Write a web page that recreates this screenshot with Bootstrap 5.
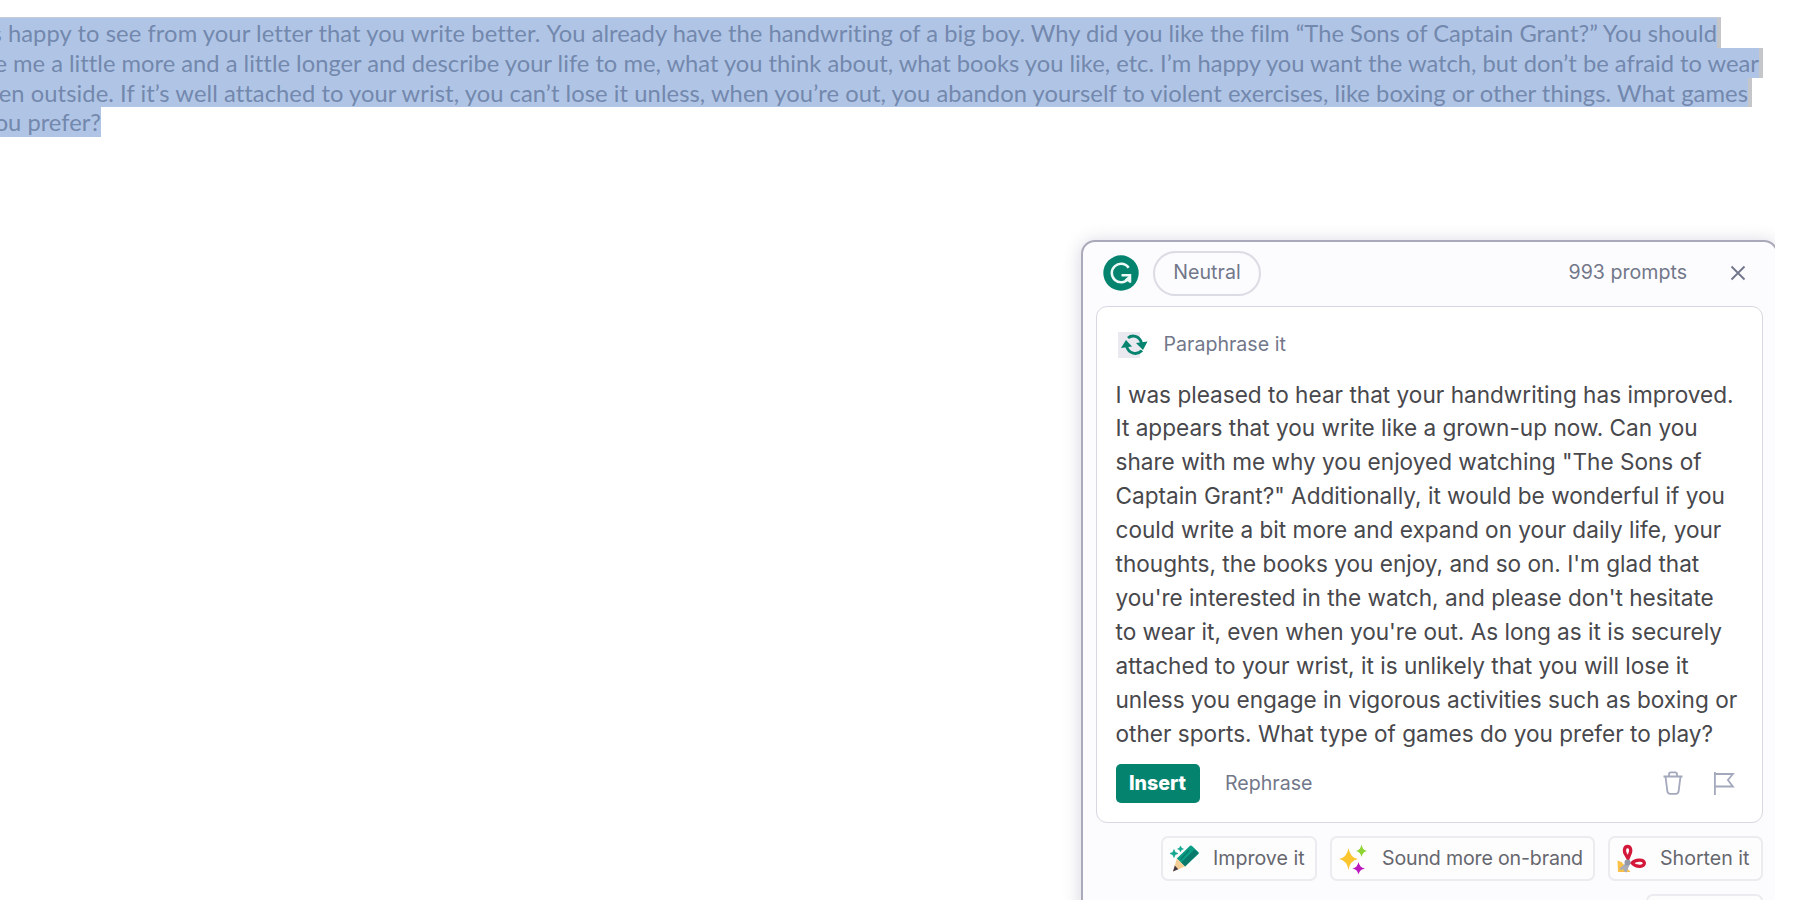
<!DOCTYPE html>
<html lang="en">
<head>
  <meta charset="UTF-8">
  <meta name="viewport" content="width=device-width, initial-scale=1">
  <title>Paraphrase it</title>
  <link href="https://cdn.jsdelivr.net/npm/bootstrap@5.3.3/dist/css/bootstrap.min.css" rel="stylesheet">
  <style>
    body { background: #fff; font-family: Inter, sans-serif; overflow: hidden; }
    .stage { width: 1775px; height: 900px; }

    /* Selected letter text, each line ends at its own width */
    .letter { padding-top: 18px; height: 240px; font: 23.74px/30.6px Lato, sans-serif; font-variant-ligatures: none; color: #7388ad; }
    .sel-line { height: 29.8px; background: #b0c5e5; border-right: 4px solid #c4c6c9; }
    .sel-line:first-child { width: 1721px; letter-spacing: .015px; box-shadow: 0 -1px 0 #c6ccd8; }
    .sel-line:nth-child(2) { width: 1763px; }
    .sel-line:nth-child(3) { width: 1752px; letter-spacing: .06px; }
    .sel-line:last-child { width: 101px; border: 0; }
    .first-sentence { letter-spacing: .085px; white-space: pre; }

    /* Assistant panel */
    .assistant { width: 697px; height: 690px; margin-right: -3px; padding: 9px 13px 0 12.5px; font-size: 19.6px; line-height: 1.2; color: #72778a; background: #fcfcfe; border: 2px solid #aaa9b9; border-radius: 14px; box-shadow: 0 2px 18px rgba(60, 60, 110, .22); }
    .topbar { height: 44px; padding: 0 17px 0 7px; }
    .tone { width: 108px; height: 45px; border: 2px solid #dcdce5; margin-left: 14.5px; }
    .btn-x { margin-left: 43px; }
    .answer { height: 517px; margin-top: 11px; padding: 24px 27px 0 19px; background: #fff; border: 1.5px solid #d7d8e1; border-radius: 11px; }
    .answer-text { margin: 18.5px -12px 0 0; font-size: 22.6px; line-height: 33.93px; color: #48484c; white-space: nowrap; }
    .answer-actions { height: 39px; margin-top: 13px; }
    .btn-insert { width: 84px; height: 39px; font-size: 19.6px; line-height: 1; font-weight: 800; color: #fff; background: #04836f; border-radius: 5px; }
    .rephrase { margin-left: 25.5px; }
    .flag { margin-left: 30px; }
    .chips { gap: 13px; margin-top: 13px; }
    .chip-btn { height: 45px; padding-left: 7px; color: #66676e; background: #fdfdfe; border: 2px solid #ebebf0; border-radius: 7px; }
    .chip-btn svg { margin-right: 14px; }
    .chip-improve { width: 156px; }
    .chip-brand { width: 265px; letter-spacing: -.17px; }
    .chip-shorten { width: 155px; }
    .chip-next { width: 117px; }
  </style>
</head>
<body>
  <div class="stage d-flex flex-column overflow-hidden">
    <!-- Letter -->
    <div class="letter flex-shrink-0 text-nowrap">
      <div class="sel-line d-flex justify-content-end"><span class="first-sentence">s happy to see from your letter that you write better. </span>You already have the handwriting of a big boy. Why did you like the film “The Sons of Captain Grant?” You should</div>
      <div class="sel-line d-flex justify-content-end">e me a little more and a little longer and describe your life to me, what you think about, what books you like, etc. I’m happy you want the watch, but don’t be afraid to wear</div>
      <div class="sel-line d-flex justify-content-end">en outside. If it’s well attached to your wrist, you can’t lose it unless, when you’re out, you abandon yourself to violent exercises, like boxing or other things. What games</div>
      <div class="sel-line d-flex justify-content-end">ou prefer?</div>
    </div>

    <!-- Assistant -->
    <div class="assistant flex-shrink-0 align-self-end">
      <div class="topbar d-flex align-items-center">
        <svg width="36" height="36" viewBox="0 0 36 36">
          <circle cx="18" cy="18" r="17.7" fill="#04836f"/>
          <path d="M25.7 12.7A9.3 9.3 0 1 0 25.7 23.4M18.5 20.3H27V27.5" fill="none" stroke="#eefaf7" stroke-width="2.5"/>
          <path d="M27.8 19.2v8.7l-6.2-3.1z" fill="#eefaf7"/>
        </svg>
        <div class="tone rounded-pill d-flex align-items-center justify-content-center">Neutral</div>
        <span class="ms-auto">993 prompts</span>
        <svg class="btn-x" width="16" height="16" viewBox="0 0 16 16">
          <path d="M1.5 1.5l13 13m0-13l-13 13" stroke="#73778b" stroke-width="1.9"/>
        </svg>
      </div>

      <div class="answer">
        <div class="d-flex align-items-center">
          <svg width="32" height="28" viewBox="0 0 32 28">
            <path d="M2 1h22v26H2z" fill="#e9e9ef"/>
            <path d="M12 7C16 3.500 23.500 4.500 25.500 12M26 19.500C21 24.500 12.500 23 10.500 15" fill="none" stroke="#07846f" stroke-width="2.900"/>
            <path d="M20 12l11.500-1.500L27 19zM16 15.500L5 17 10 9z" fill="#07846f"/>
          </svg>
          <span class="ms-3">Paraphrase it</span>
        </div>
        <p class="answer-text">
          I was pleased to hear that your handwriting has improved.<br>
          It appears that you write like a grown-up now. Can you<br>
          share with me why you enjoyed watching "The Sons of<br>
          Captain Grant?" Additionally, it would be wonderful if you<br>
          could write a bit more and expand on your daily life, your<br>
          thoughts, the books you enjoy, and so on. I'm glad that<br>
          you're interested in the watch, and please don't hesitate<br>
          to wear it, even when you're out. As long as it is securely<br>
          attached to your wrist, it is unlikely that you will lose it<br>
          unless you engage in vigorous activities such as boxing or<br>
          other sports. What type of games do you prefer to play?
        </p>
        <div class="answer-actions d-flex align-items-center">
          <button class="btn btn-insert border-0 p-0">Insert</button>
          <span class="rephrase">Rephrase</span>
          <svg class="ms-auto" width="20" height="24" viewBox="0 0 20 24" fill="none" stroke="#a3a8bc" stroke-width="1.800">
            <path d="M.5 5.500h19M6 5.500V3.200Q6 1.300 8 1.300h4q2 0 2 1.900v2.300M2.500 5.500l1.800 14.300q.4 3 3 3h5.400q2.600 0 3-3l1.800-14.300"/>
          </svg>
          <svg class="flag" width="22" height="24" viewBox="0 0 22 24" fill="none" stroke="#a3a8bc" stroke-width="1.800">
            <path d="M1.900 1v23M1.900 3h18l-5 6 5 6.500h-18"/>
          </svg>
        </div>
      </div>

      <div class="chips d-flex flex-wrap justify-content-end">
        <div class="chip-btn chip-improve d-flex align-items-center text-nowrap">
          <svg width="29" height="28" viewBox="0 0 29 28">
            <path d="M20 .8q1-.8 2 .1l6.300 6.100q.9 1 .1 2L15 21.500 6.800 13.500z" fill="#0b9c84"/>
            <path d="M24.500 4.500L28.500 8 15 21.500l-3.800-3.800z" fill="#08796a"/>
            <path d="M19 5L10.500 14.500" stroke="#08796a" stroke-width="1.200"/>
            <path d="M6.800 13.500L15 21.500 3 26.500z" fill="#f3cf96"/>
            <path d="M4.800 20.500l3.500 3.700L3 26.500z" fill="#453b45"/>
            <path d="M4 4.500l1.200 2.800L8 8.500 5.200 9.700 4 12.500 2.800 9.700 0 8.500l2.800-1.200zM10.500 1l.9 2 2 .9-2 .9-.9 2-.9-2-2-.9 2-.9z" fill="#12a890" stroke="#12a890" stroke-width=".6"/>
          </svg>
          Improve it
        </div>
        <div class="chip-btn chip-brand d-flex align-items-center text-nowrap">
          <svg width="29" height="30" viewBox="0 0 29 30">
            <path d="M9.500 4Q11 13.500 19 15 11 16.500 9.500 26 8 16.500 0 15 8 13.500 9.500 4z" fill="#fbc52f"/>
            <path d="M22.500.5Q23.500 6 28 7 23.500 8 22.500 13 21.500 8 17 7 21.500 6 22.500.5z" fill="#8fd434"/>
            <path d="M19.500 18Q20.500 23.500 26 24.500 20.500 25.500 19.500 30.500 18.500 25.500 13.500 24.500 18.500 23.500 19.500 18z" fill="#bb18bd"/>
          </svg>
          Sound more on-brand
        </div>
        <div class="chip-btn chip-shorten d-flex align-items-center text-nowrap">
          <svg width="29" height="30" viewBox="0 0 29 30">
            <path d="M.5 16.500l4 1.500 9 10H1z" fill="#fbc047"/>
            <path d="M9.500 15.500l3.500 4-3.500 9-3-1.500zM9.500 18.500l3.500 2-8 5.500-3-1z" fill="#a9adb7"/>
            <path d="M10.500 2.500c3.600 0 3.800 4.500 2.400 7.300L11 14.500 8.300 9.800C6.800 7 7.200 2.500 10.500 2.500zM15 19c3-3.300 11.500-4 12.300-.3.700 4.500-7.800 5.200-12.300.3z" fill="none" stroke="#d3183a" stroke-width="3.300"/>
            <circle cx="10.500" cy="18.500" r="3" fill="#9298a5"/>
          </svg>
          Shorten it
        </div>
        <div class="chip-btn chip-next"></div>
      </div>
    </div>
  </div>
  <script src="https://cdn.jsdelivr.net/npm/bootstrap@5.3.3/dist/js/bootstrap.bundle.min.js"></script>
</body>
</html>
